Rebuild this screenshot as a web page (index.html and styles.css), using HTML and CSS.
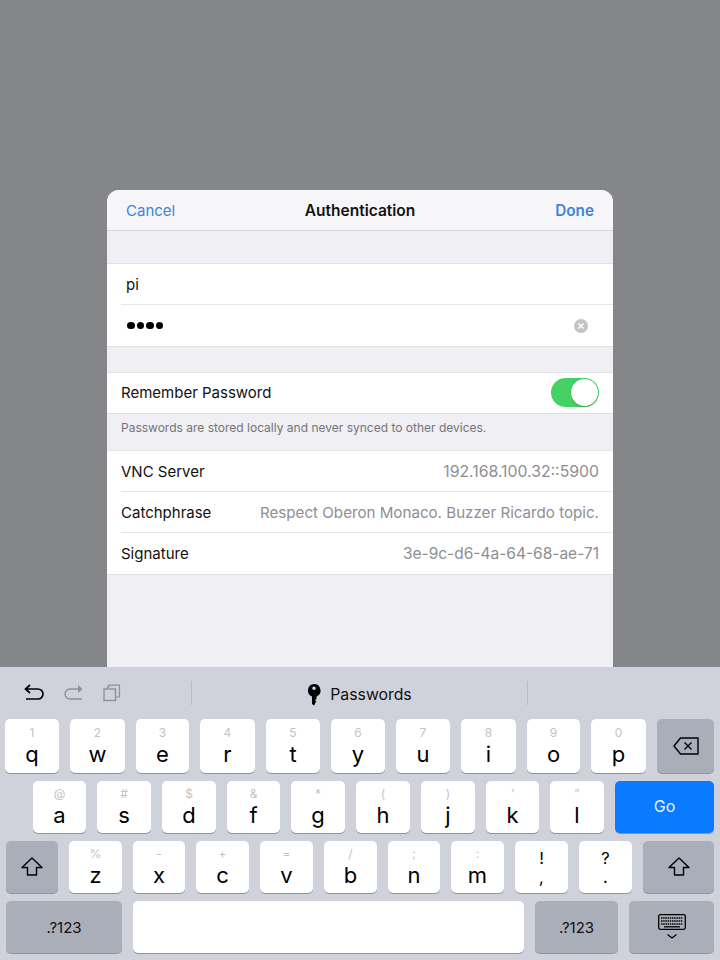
FILE: index.html
```html
<!DOCTYPE html>
<html lang="en">
<head>
<meta charset="utf-8">
<title>Authentication</title>
<link rel="stylesheet" href="styles.css">
</head>
<body>
<div class="screen">
  <main class="backdrop">
    <section class="sheet">
      <header class="nav">
        <span class="nav-btn">Cancel</span>
        <span class="nav-title">Authentication</span>
        <span class="nav-btn nav-done">Done</span>
      </header>
      <div class="group group-login">
        <div class="row field"><span>pi</span></div>
        <div class="row field field-last">
          <span class="dots"><i></i><i></i><i></i><i></i></span>
          <svg class="clear" viewBox="0 0 14 14"><circle cx="7" cy="7" r="7" fill="#c4c4c7"/><path d="M4.5 4.5l5 5M9.5 4.5l-5 5" stroke="#fff" stroke-width="1.6" fill="none"/></svg>
        </div>
      </div>
      <div class="group group-remember">
        <div class="row"><span>Remember Password</span><span class="switch"><span class="knob"></span></span></div>
      </div>
      <p class="note">Passwords are stored locally and never synced to other devices.</p>
      <div class="group group-info">
        <div class="row"><span>VNC Server</span><span class="value value-num">192.168.100.32::5900</span></div>
        <div class="row"><span>Catchphrase</span><span class="value">Respect Oberon Monaco. Buzzer Ricardo topic.</span></div>
        <div class="row"><span>Signature</span><span class="value value-hex">3e-9c-d6-4a-64-68-ae-71</span></div>
      </div>
    </section>
  </main>
  <section class="keyboard">
    <div class="toolbar">
      <div class="tool-left">
        <svg class="tool" viewBox="0 0 22 20"><path d="M7 2L2.5 6 7 10M3 6h12a5 5 0 0 1 0 10H3" fill="none" stroke="#000" stroke-width="1.7"/></svg>
        <svg class="tool" viewBox="0 0 22 20"><path d="M15 2l4.5 4L15 10" fill="#8d9097"/><path d="M18 6H7a5 5 0 0 0 0 10h12" fill="none" stroke="#8d9097" stroke-width="1.4"/></svg>
        <svg class="tool tool-copy" viewBox="0 0 18 18"><path d="M4.500 4.500V2.800h1.500V1.200h10.500V13H13" fill="none" stroke="#8d9097" stroke-width="1.200"/><rect x="1" y="5" width="11.500" height="11.500" fill="none" stroke="#8d9097" stroke-width="1.400"/></svg>
      </div>
      <div class="tool-mid">
        <svg class="key-icon" viewBox="0 0 14 22"><path fill-rule="evenodd" d="M7 0a6.500 6.500 0 0 1 2.500 12.500V15L8 16.300l1.500 1.400L8 19l0 1-1 1.500L5 20V12.500A6.500 6.500 0 0 1 7 0zM7 2.500a1.800 1.800 0 1 0 0 3.600 1.800 1.800 0 0 0 0-3.600z" fill="#000"/></svg>
        <span>Passwords</span>
      </div>
    </div>
    <div class="kb-row row-1">
      <div class="key w54"><small>1</small><b>q</b></div>
      <div class="key w55"><small>2</small><b>w</b></div>
      <div class="key w53"><small>3</small><b>e</b></div>
      <div class="key w55"><small>4</small><b>r</b></div>
      <div class="key w54"><small>5</small><b>t</b></div>
      <div class="key w54"><small>6</small><b>y</b></div>
      <div class="key w54"><small>7</small><b>u</b></div>
      <div class="key w55"><small>8</small><b>i</b></div>
      <div class="key w53"><small>9</small><b>o</b></div>
      <div class="key w55"><small>0</small><b>p</b></div>
      <div class="key mod w57">
        <svg class="del" viewBox="0 0 26 18"><path d="M7.500 1H25v16H7.500L1 9z" fill="none" stroke="#000" stroke-width="1.400" stroke-linejoin="round"/><path d="M11.500 5.500l7 7M18.500 5.500l-7 7" stroke="#000" stroke-width="1.400"/></svg>
      </div>
    </div>
    <div class="kb-row row-2">
      <div class="key w53"><small>@</small><b>a</b></div>
      <div class="key w54"><small>#</small><b>s</b></div>
      <div class="key w54"><small>$</small><b>d</b></div>
      <div class="key w53"><small>&amp;</small><b>f</b></div>
      <div class="key w54"><small>*</small><b>g</b></div>
      <div class="key w54"><small>(</small><b>h</b></div>
      <div class="key w54"><small>)</small><b>j</b></div>
      <div class="key w53"><small>’</small><b>k</b></div>
      <div class="key w54"><small>”</small><b>l</b></div>
      <div class="key go">Go</div>
    </div>
    <div class="kb-row">
      <div class="key mod w52">
        <svg class="shift" viewBox="0 0 22 20"><path d="M11 1L1 10.500h5.500V18h9v-7.500H21z" fill="none" stroke="#000" stroke-width="1.400" stroke-linejoin="round"/></svg>
      </div>
      <div class="key w53"><small>%</small><b>z</b></div>
      <div class="key w52"><small>-</small><b>x</b></div>
      <div class="key w53"><small>+</small><b>c</b></div>
      <div class="key w53"><small>=</small><b>v</b></div>
      <div class="key w53"><small>/</small><b>b</b></div>
      <div class="key w52"><small>;</small><b>n</b></div>
      <div class="key w53"><small>:</small><b>m</b></div>
      <div class="key w53 punct"><span>!</span><span>,</span></div>
      <div class="key w53 punct"><span>?</span><span>.</span></div>
      <div class="key mod w71">
        <svg class="shift" viewBox="0 0 22 20"><path d="M11 1L1 10.500h5.500V18h9v-7.500H21z" fill="none" stroke="#000" stroke-width="1.400" stroke-linejoin="round"/></svg>
      </div>
    </div>
    <div class="kb-row">
      <div class="key mod label w116">.?123</div>
      <div class="key w391"></div>
      <div class="key mod label w83">.?123</div>
      <div class="key mod w85">
        <svg class="hide-kb" viewBox="0 0 28 26"><rect x="0.700" y="0.700" width="26.600" height="14.600" rx="1.500" fill="none" stroke="#000" stroke-width="1.300"/><path d="M3 4h22M3 7h22M3 10h22" stroke="#000" stroke-width="1.500" stroke-dasharray="1.500 0.700"/><path d="M6 12.800h16" stroke="#000" stroke-width="1.300"/><path d="M9.500 20.500l4.500 3.500 4.500-3.500" fill="none" stroke="#000" stroke-width="1.300"/></svg>
      </div>
    </div>
  </section>
</div>
</body>
</html>
```
FILE: styles.css
```css
* { box-sizing: border-box; }
html, body { margin: 0; padding: 0; }
body { font-family: Inter, "Liberation Sans", sans-serif; color: #000; }
.screen { width: 720px; height: 960px; overflow: hidden; display: flex; flex-direction: column; background: #85868a; }
.backdrop { height: 667px; padding: 190px 107px 0; flex: none; }
.sheet { width: 506px; height: 477px; background: #efeff4; border-radius: 12px 12px 0 0; overflow: hidden; }
.nav { height: 41px; padding: 0 19px; display: grid; grid-template-columns: 1fr auto 1fr; align-items: center; background: #f6f6f8; border-bottom: 1px solid #d3d3d8; }
.nav-btn { font-size: 15px; color: #3d85d6; }
.nav-done { font-weight: 600; text-align: right; font-size: 15.300px; }
.nav-title { font-size: 15.500px; font-weight: 600; color: #111; }
.group { background: #fff; border-top: 1px solid #e2e2e7; border-bottom: 1px solid #dedee3; }
.group-login { margin-top: 32px; }
.group-remember { margin-top: 25px; }
.row { height: 41px; margin-left: 14px; padding-right: 14px; display: flex; align-items: center; justify-content: space-between; font-size: 15px; color: #111; border-bottom: 1px solid #e6e6ea; }
.row:last-child { border-bottom: 0; height: 40px; }
.group-info .row:last-child { height: 41px; }
.group-login .field-last { height: 41px; }
.group-remember .row { padding-bottom: 1px; }
.field { padding-left: 5px; padding-right: 25px; }
.dots { display: flex; gap: 2px; margin-left: 1px; }
.dots i { width: 7.500px; height: 7.500px; border-radius: 50%; background: #000; }
.clear { width: 14px; height: 14px; }
.switch { width: 48px; height: 29px; border-radius: 15px; background: #45d264; position: relative; }
.knob { position: absolute; right: 1px; top: 1px; width: 27px; height: 27px; border-radius: 50%; background: #fff; box-shadow: 0 1px 2px rgba(0,0,0,.25); }
.note { margin: 0; height: 36px; padding: 6px 14px 0; font-size: 12px; line-height: 15px; color: #74747a; }
.value { color: #8e8e93; font-size: 15.150px; }
.value-num { font-size: 15.800px; }
.value-hex { font-size: 15.500px; }
.keyboard { height: 293px; flex: none; background: #cfd2da; }
.toolbar { height: 52px; display: flex; align-items: center; }
.tool-left { width: 192px; height: 24px; display: flex; align-items: center; padding-left: 23px; border-right: 1px solid #b9bcc4; }
.tool { width: 22px; height: 20px; margin-right: 18px; }
.tool-copy { width: 18px; height: 18px; }
.tool-mid { width: 336px; height: 24px; padding-top: 4px; display: flex; align-items: center; justify-content: center; gap: 9px; font-size: 15.800px; line-height: 26px; color: #111; border-right: 1px solid #b9bcc4; }
.key-icon { width: 14px; height: 22px; }
.kb-row { display: flex; gap: 11px; padding: 0 6px; height: 52px; margin-bottom: 8px; }
.row-1 { height: 54px; padding-left: 5px; }
.row-2 { padding-left: 33px; }
.key { height: 100%; flex: none; background: #fff; border-radius: 5px; box-shadow: 0 1px 0 #8f939c; display: flex; flex-direction: column; align-items: center; }
.key small { font-size: 12px; line-height: 14px; margin-top: 6px; color: #c3c3c7; }
.row-1 .key small { margin-top: 7px; }
.key b { font-weight: 400; font-size: 22px; line-height: 26px; margin-top: 1px; color: #000; }
.mod { background: #a9aeb9; justify-content: center; }
.label { font-size: 15px; color: #111; }
.go { width: 99px; background: #0a7aff; color: #e6f1ff; font-size: 16px; justify-content: center; padding-bottom: 2px; }
.punct { font-size: 16.500px; line-height: 19px; justify-content: center; padding-top: 2px; }
.punct span { display: block; height: 19px; }
.w52 { width: 52px; } .w53 { width: 53px; } .w54 { width: 54px; } .w55 { width: 55px; } .w57 { width: 57px; }
.w71 { width: 71px; } .w83 { width: 83px; } .w85 { width: 85px; } .w116 { width: 116px; } .w391 { width: 391px; }
.del { width: 26px; height: 18px; }
.shift { width: 22px; height: 20px; }
.hide-kb { width: 28px; height: 26px; }
```
